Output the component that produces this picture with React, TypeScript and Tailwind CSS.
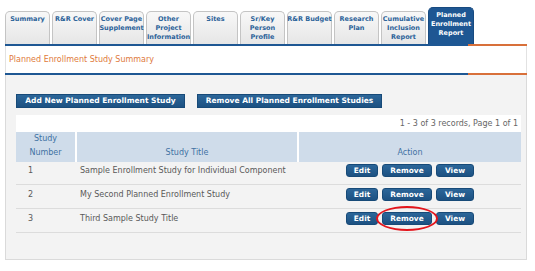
import React from "react";

const tabs: { lines: string[]; active?: boolean }[] = [
    { lines: ["Summary"] },
    { lines: ["R&R Cover"] },
    { lines: ["Cover Page", "Supplement"] },
    { lines: ["Other", "Project", "Information"] },
    { lines: ["Sites"] },
    { lines: ["Sr/Key", "Person", "Profile"] },
    { lines: ["R&R Budget"] },
    { lines: ["Research", "Plan"] },
    { lines: ["Cumulative", "Inclusion", "Report"] },
    { lines: ["Planned", "Enrollment", "Report"], active: true },
];

const studies = [
    { num: "1", title: "Sample Enrollment Study for Individual Component" },
    { num: "2", title: "My Second Planned Enrollment Study" },
    { num: "3", title: "Third Sample Study Title", circled: true },
];

function SmallButton({ label, width }: { label: string; width: string }) {
    return (
        <button
            className={`${width} h-[13px] flex items-center justify-center rounded-[3px] border border-[#174a78] bg-gradient-to-b from-[#2c6699] to-[#1c5182] text-[7.4px] font-bold leading-none text-white`}
        >
            {label}
        </button>
    );
}

// blue line with the orange tail on the right
function SplitLine() {
    return (
        <div className="ml-[5px] flex h-[2px] w-[522px]">
            <div className="h-full w-[463px] bg-[#1e5793]" />
            <div className="h-full flex-1 bg-[#d8703a]" />
        </div>
    );
}

export default function App() {
    return (
        <div
            className="h-[271px] w-[535px] overflow-hidden bg-white"
            style={{ fontFamily: '"DejaVu Sans", Verdana, sans-serif' }}
        >
            {/* tabs */}
            <div className="flex h-[44px] items-end gap-[2px] pl-[5px]">
                {tabs.map((tab) =>
                    tab.active ? (
                        <div
                            key={tab.lines.join()}
                            className="flex h-[37px] w-[46px] flex-col items-center rounded-t-[5px] border border-b-0 border-[#174a80] bg-[#1e5793] pt-[3px] text-[6.5px] font-bold leading-[9px] text-white"
                        >
                            {tab.lines.map((l) => (
                                <span key={l} className="whitespace-nowrap">
                                    {l}
                                </span>
                            ))}
                        </div>
                    ) : (
                        <div
                            key={tab.lines.join()}
                            className="flex h-[33px] w-[45px] flex-col items-center rounded-t-[5px] border border-b-0 border-[#c4c4c4] bg-gradient-to-b from-[#f8f8f8] to-[#e6e6e6] pt-[3px] text-[6.5px] font-bold leading-[9px] text-[#2b6299]"
                        >
                            {tab.lines.map((l) => (
                                <span key={l} className="whitespace-nowrap">
                                    {l}
                                </span>
                            ))}
                        </div>
                    )
                )}
            </div>
            <SplitLine />

            {/* section title */}
            <div className="ml-[5px] flex h-[27px] w-[522px] items-center border-x border-[#e2e2e2] bg-white pl-[3px] text-[8px] text-[#e07a3c]">
                Planned Enrollment Study Summary
            </div>
            <SplitLine />

            {/* panel */}
            <div className="ml-[5px] h-[185px] w-[522px] border border-t-0 border-[#dadada] bg-[#f3f3f3] pl-[10px] pr-[5px] pt-[19px]">
                <div className="flex gap-[12px]">
                    <button className="flex h-[14px] w-[169px] items-center justify-center border border-[#174a78] bg-gradient-to-b from-[#2c6699] to-[#1c5182] text-[7.5px] font-bold text-white">
                        Add New Planned Enrollment Study
                    </button>
                    <button className="flex h-[14px] w-[185px] items-center justify-center border border-[#174a78] bg-gradient-to-b from-[#2c6699] to-[#1c5182] text-[7.5px] font-bold text-white">
                        Remove All Planned Enrollment Studies
                    </button>
                </div>

                <div className="mt-[7px] w-[505px]">
                    <div className="flex h-[17px] items-center justify-end bg-white pr-[3px] text-[8px] text-[#666]">
                        1 - 3 of 3 records, Page 1 of 1
                    </div>

                    {/* header */}
                    <div className="flex h-[30px] bg-[#cfdcea] text-[8px] text-[#3f72a3]">
                        <div className="flex w-[61px] flex-col items-center justify-end border-r-2 border-white pb-[2px] leading-[14px]">
                            <span>Study</span>
                            <span>Number</span>
                        </div>
                        <div className="flex w-[222px] items-end justify-center border-r-2 border-white pb-[2px] leading-[14px]">
                            Study Title
                        </div>
                        <div className="flex flex-1 items-end justify-center pb-[2px] leading-[14px]">
                            Action
                        </div>
                    </div>

                    {/* rows */}
                    {studies.map((s, i) => (
                        <div
                            key={s.num}
                            className={`flex ${i === 0 ? "h-[23px] pt-[2px]" : "h-[24px] pt-[3px]"} border-b border-[#dcdcdc] text-[8px] text-[#595959]`}
                        >
                            <div className="flex h-[13px] w-[61px] items-center pl-[12px]">{s.num}</div>
                            <div className="flex h-[13px] w-[222px] items-center pl-[3px]">{s.title}</div>
                            <div className="flex h-[13px] flex-1 items-center justify-center gap-[4px]">
                                <SmallButton label="Edit" width="w-[32px]" />
                                <div className="relative">
                                    <SmallButton label="Remove" width="w-[50px]" />
                                    {s.circled && (
                                        <div className="pointer-events-none absolute -left-[6px] -top-[6px] h-[25px] w-[62px] rounded-[50%] border-2 border-[#e3151c]" />
                                    )}
                                </div>
                                <SmallButton label="View" width="w-[38px]" />
                            </div>
                        </div>
                    ))}
                </div>
            </div>
        </div>
    );
}
